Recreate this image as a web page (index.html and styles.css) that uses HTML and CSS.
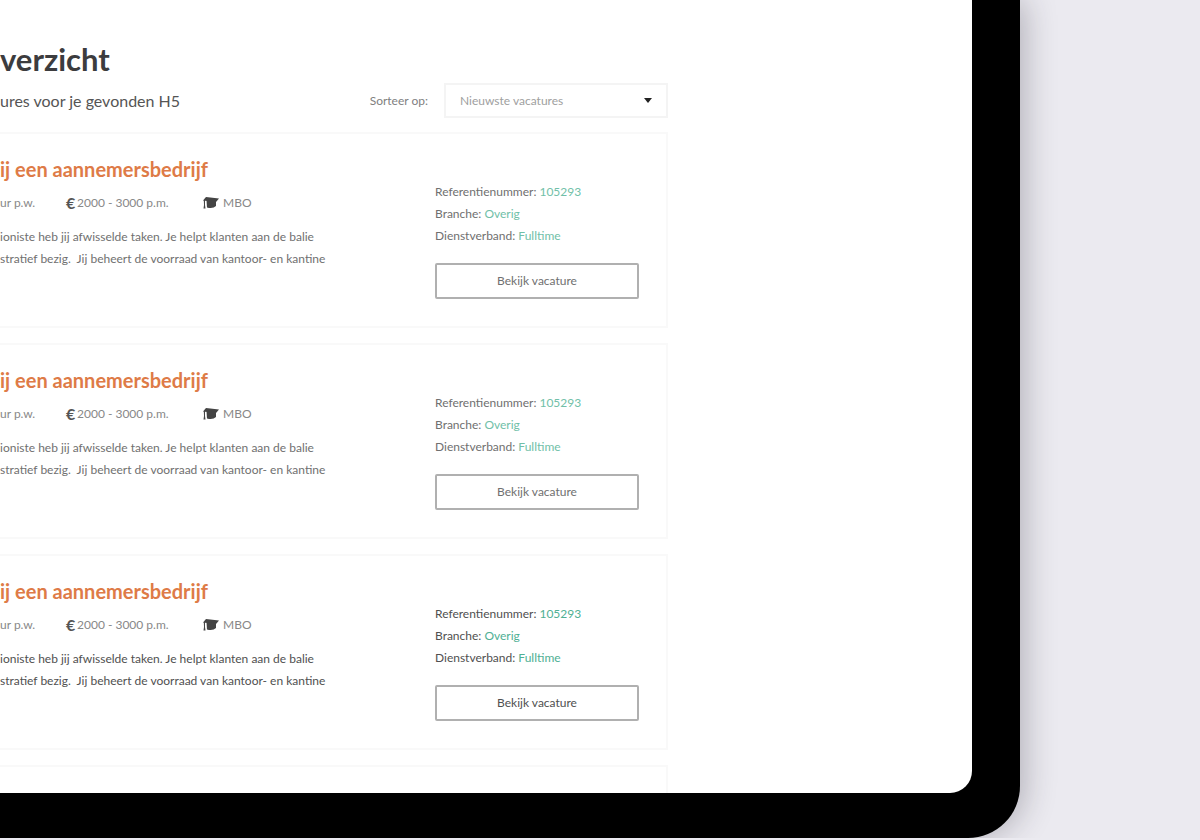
FILE: index.html
```
<!DOCTYPE html>
<html lang="nl">

<head>
    <meta charset="UTF-8">
    <meta name="viewport" content="width=device-width, initial-scale=1.0">
    <title>Vacatures</title>
    <link rel="stylesheet" href="styles.css">
</head>

<body>
    <svg class="sprite" aria-hidden="true">
        <symbol id="cap" viewBox="0 0 16 14">
            <path d="M3 1L16 2.500L13 6L0 4.500Z" />
            <path d="M3.500 4.500L13 5V10Q10 13 4 11.500Z" />
            <path d="M.8 4H2V9L2.500 12.500H.5L1 9Z" />
        </symbol>
    </svg>
    <div class="device">
        <main class="screen">
            <h1>verzicht</h1>
            <div class="toolbar">
                <p class="result">ures voor je gevonden H5</p>
                <label for="sort">Sorteer op:</label>
                <div class="select">
                    <select id="sort">
                        <option>Nieuwste vacatures</option>
                    </select>
                </div>
            </div>
            <div class="list">
                <article class="card">
                    <div class="info">
                        <h2>ij een aannemersbedrijf</h2>
                        <div class="meta">
                            <span>ur p.w.</span>
                            <span><b>€</b>2000 - 3000 p.m.</span>
                            <span><svg class="cap"><use href="#cap" /></svg>MBO</span>
                        </div>
                        <p class="text">ioniste heb jij afwisselde taken. Je helpt klanten aan de balie<br>stratief bezig. &nbsp;Jij beheert de voorraad van kantoor- en kantine</p>
                    </div>
                    <div class="details">
                        <p>Referentienummer: <span>105293</span></p>
                        <p>Branche: <span>Overig</span></p>
                        <p>Dienstverband: <span>Fulltime</span></p>
                        <button type="button">Bekijk vacature</button>
                    </div>
                </article>
                <article class="card">
                    <div class="info">
                        <h2>ij een aannemersbedrijf</h2>
                        <div class="meta">
                            <span>ur p.w.</span>
                            <span><b>€</b>2000 - 3000 p.m.</span>
                            <span><svg class="cap"><use href="#cap" /></svg>MBO</span>
                        </div>
                        <p class="text">ioniste heb jij afwisselde taken. Je helpt klanten aan de balie<br>stratief bezig. &nbsp;Jij beheert de voorraad van kantoor- en kantine</p>
                    </div>
                    <div class="details">
                        <p>Referentienummer: <span>105293</span></p>
                        <p>Branche: <span>Overig</span></p>
                        <p>Dienstverband: <span>Fulltime</span></p>
                        <button type="button">Bekijk vacature</button>
                    </div>
                </article>
                <article class="card card_active">
                    <div class="info">
                        <h2>ij een aannemersbedrijf</h2>
                        <div class="meta">
                            <span>ur p.w.</span>
                            <span><b>€</b>2000 - 3000 p.m.</span>
                            <span><svg class="cap"><use href="#cap" /></svg>MBO</span>
                        </div>
                        <p class="text">ioniste heb jij afwisselde taken. Je helpt klanten aan de balie<br>stratief bezig. &nbsp;Jij beheert de voorraad van kantoor- en kantine</p>
                    </div>
                    <div class="details">
                        <p>Referentienummer: <span>105293</span></p>
                        <p>Branche: <span>Overig</span></p>
                        <p>Dienstverband: <span>Fulltime</span></p>
                        <button type="button">Bekijk vacature</button>
                    </div>
                </article>
                <div class="card_next"></div>
            </div>
        </main>
    </div>
</body>

</html>
```
FILE: styles.css
```
* {
    box-sizing: border-box;
}

body {
    margin: 0;
    background: #ebeaf0;
    color: #707070;
    font-family: Lato, sans-serif;
    font-size: 12px;
    line-height: 22px;
    overflow: hidden;
}

h1,
h2,
p {
    margin: 0;
    white-space: nowrap;
}

.sprite {
    display: none;
}

.device {
    margin-right: 180px;
    padding: 0 48px 45px 0;
    background: #000000;
    border-radius: 0 0 52px 0;
    box-shadow: 4px 0 32px rgba(40, 38, 50, 0.3);
}

.screen {
    padding: 39px 304px 0 0;
    background: #ffffff;
    border-radius: 0 0 22px 0;
    overflow: hidden;
}

h1 {
    color: #3c3c3e;
    font-size: 31px;
    font-weight: bold;
    line-height: 40px;
}

.toolbar {
    display: flex;
    align-items: center;
    margin: 4px 0 14px;
}

.result {
    flex: 1;
    color: #555555;
    font-size: 16px;
}

.toolbar label {
    color: #808080;
    margin-right: 16px;
}

.select {
    position: relative;
    width: 224px;
}

.select::after {
    content: "";
    position: absolute;
    top: 15px;
    right: 16px;
    border: 4px solid transparent;
    border-top: 5px solid #222222;
    border-bottom: 0;
}

select {
    display: block;
    width: 100%;
    height: 35px;
    padding: 0 14px;
    appearance: none;
    background: #ffffff;
    border: 2px solid #f4f4f4;
    border-radius: 0;
    color: #a0a0a0;
    font: inherit;
}

.list {
    display: grid;
    gap: 15px;
}

.card {
    display: grid;
    grid-template-columns: 1fr 204px;
    padding: 24px 27px 27px 0;
    border: 2px solid #f9f9f9;
    border-left: 0;
}

h2 {
    color: #de7b47;
    font-size: 20px;
    font-weight: bold;
    line-height: 22px;
}

.meta {
    display: grid;
    grid-template-columns: 66px 137px 1fr;
    margin: 12px 0;
    color: #888888;
}

.meta span {
    display: flex;
    align-items: center;
}

.meta b {
    width: 11px;
    color: #555555;
    font-size: 16px;
}

.cap {
    width: 16px;
    height: 14px;
    margin-right: 4px;
    fill: #444444;
}

.details {
    padding-top: 23px;
}

.details span {
    color: #71bfa8;
}

button {
    display: block;
    width: 100%;
    height: 36px;
    margin-top: 16px;
    padding: 0;
    background: #ffffff;
    border: 2px solid #b0b0b0;
    border-radius: 2px;
    color: #707070;
    font: inherit;
}

.card_active,
.card_active button {
    color: #505050;
}

.card_active .details span {
    color: #4fb094;
}

.card_next {
    height: 28px;
    border: 2px solid #f9f9f9;
    border-width: 2px 2px 0 0;
}
```
